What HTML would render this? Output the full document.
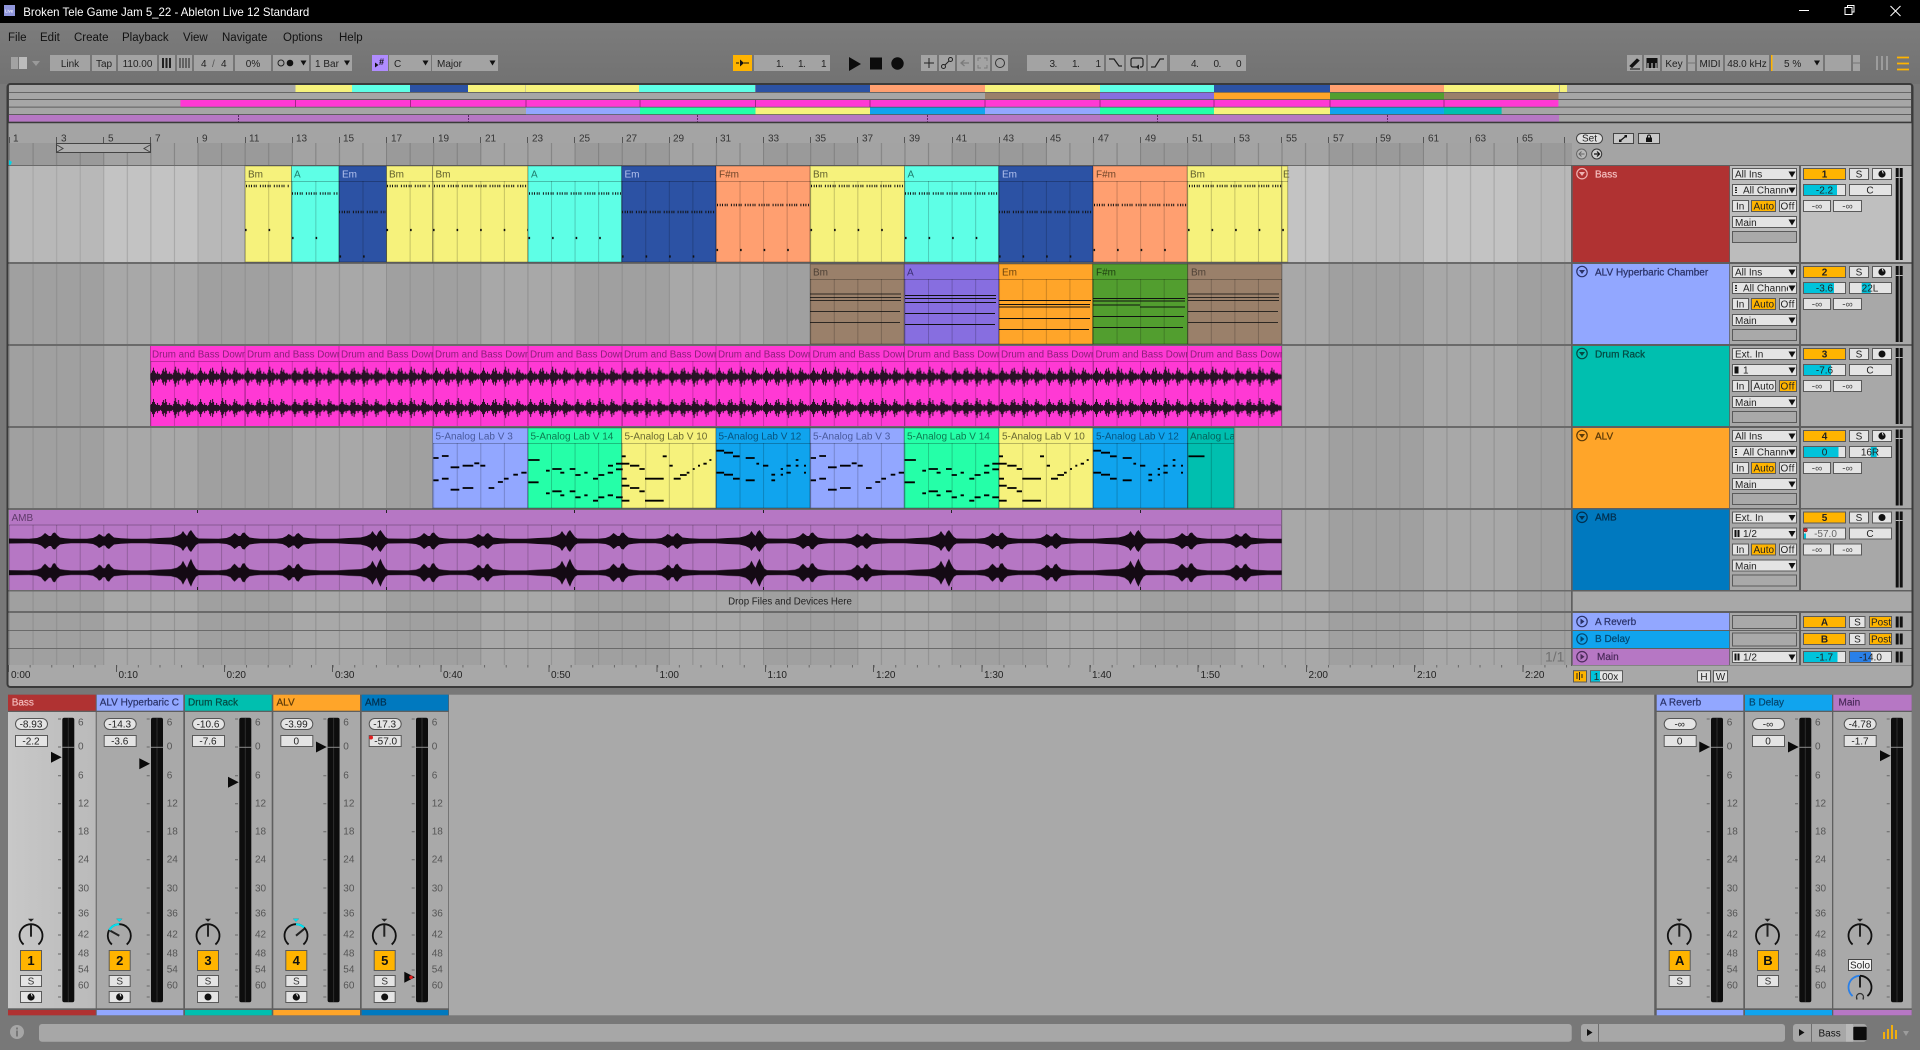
<!DOCTYPE html>
<html><head><meta charset="utf-8"><title>Broken Tele Game Jam 5_22 - Ableton Live 12 Standard</title>
<style>
html,body{margin:0;padding:0;background:#787878;width:1920px;height:1050px;overflow:hidden}
svg{display:block}
text{font-family:"Liberation Sans",sans-serif;font-size:10px;fill:#222}
.m{text-anchor:middle}
.t{fill:#a3a3a3}
.w{fill:#e4e4e4;stroke:#5a5a5a}
.o{fill:#ffb400;stroke:#5a5a5a}
.e{fill:#a9a9a9;stroke:#5a5a5a}
.k{stroke:#000;stroke-opacity:.28}
.l{stroke:#000;stroke-opacity:.25;fill:none}
.s{stroke:#222;fill:none}
.lb text{fill:#555}
.mn{font-size:11.5px;fill:#111}
.hl{stroke-width:.2}
</style></head><body>
<svg width="1920" height="1050" viewBox="0 0 1920 1050" xmlns="http://www.w3.org/2000/svg">
<defs>
<linearGradient id="tbg" x1="0" y1="0" x2="0" y2="1"><stop offset="0" stop-color="#7c7c7c"/><stop offset="1" stop-color="#727272"/></linearGradient>
<linearGradient id="sel" x1="0" y1="0" x2="1" y2="0"><stop offset="0" stop-color="#c8c8c8"/><stop offset="1" stop-color="#bababa"/></linearGradient>
<pattern id="g" patternUnits="userSpaceOnUse" x="9" y="0" width="188.52" height="10"><rect width="94.26" height="10" fill="#a0a0a0"/><rect x="94.26" width="94.26" height="10" fill="#a8a8a8"/><path d="M.5 0v10M24.07 0v10M47.63 0v10M71.2 0v10M94.76 0v10M118.33 0v10M141.89 0v10M165.46 0v10" stroke="#8f8f8f"/></pattern>
<pattern id="gs" patternUnits="userSpaceOnUse" x="9" y="0" width="188.52" height="10"><rect width="94.26" height="10" fill="#b8b8b8"/><rect x="94.26" width="94.26" height="10" fill="#c3c3c3"/><path d="M.5 0v10M24.07 0v10M47.63 0v10M71.2 0v10M94.76 0v10M118.33 0v10M141.89 0v10M165.46 0v10" stroke="#a4a4a4"/></pattern>
<pattern id="gr" patternUnits="userSpaceOnUse" x="9" y="0" width="188.52" height="10"><rect width="94.26" height="10" fill="#9a9a9a"/><rect x="94.26" width="94.26" height="10" fill="#a3a3a3"/><path d="M.5 0v10M24.07 0v10M47.63 0v10M71.2 0v10M94.76 0v10M118.33 0v10M141.89 0v10M165.46 0v10" stroke="#808080"/></pattern>
<pattern id="cg" patternUnits="userSpaceOnUse" x="9" y="0" width="23.565" height="10"><path d="M.5 0v10" stroke="#000" stroke-opacity=".2"/></pattern>
<pattern id="mt" patternUnits="userSpaceOnUse" x="8" y="665" width="21.64" height="3"><path d="M.5 0v3" stroke="#666"/></pattern>
<pattern id="dw" patternUnits="userSpaceOnUse" x="150" y="364.7" width="47.15" height="31.3"><path stroke="#1c101c" stroke-width=".95" d="M.5 9v6M1.5 8v8M2.5 6v12M3.5 3v18M4.5 6v12M5.5 8v8M6.5 9v6M7.5 7v10M8.5 9v6M9.5 9v6M10.5 10v4M11.5 9v6M12.5 6v12M13.5 4v16M14.5 7v10M15.5 3v18M16.5 6v12M17.5 9v6M18.5 9v6M19.5 7v10M20.5 9v6M21.5 9v6M22.5 10v4M23.5 8v8M24.5 5v14M25.5 2v20M26.5 6v12M27.5 8v8M28.5 4v16M29.5 8v8M30.5 9v6M31.5 10v4M32.5 8v8M33.5 9v6M34.5 10v4M35.5 9v6M36.5 6v12M37.5 3v18M38.5 7v10M39.5 5v14M40.5 8v8M41.5 9v6M42.5 8v8M43.5 9v6M44.5 10v4M45.5 9v6M46.5 10v4"/></pattern>
<pattern id="aw1" patternUnits="userSpaceOnUse" x="9" y="526" width="189.5" height="30"><polygon fill="#140a14" points="0,12.5 20,12.8 28,12 32,10.5 34,9 36,7 38,8.5 40,10 42,10 44,7 46,6.5 48,9 51,11.5 56,12.3 62,12.8 78,12.8 84,12 88,10 90,8 92,9 94,10.5 96,10.5 98,8 100,7 102,9 105,11.5 112,12.3 122,12.8 138,12.8 150,12 162,11.5 168,10 172,8 174,5 176,8 178,10 180,6 182,4 184,7 187,11 189.5,12.5 189.5,17.5 187,19 184,23 182,26 180,24 178,20 176,22 174,25 172,22 168,20 162,18.5 150,18 138,17.2 122,17.2 112,17.7 105,18.5 102,21 100,23 98,22 96,19.5 94,19.5 92,21 90,22 88,20 84,18 78,17.2 62,17.2 56,17.7 51,18.5 48,21 46,23.5 44,23 42,20 40,20 38,21.5 36,23 34,21 32,19.5 28,18 20,17.2 0,17.5"/></pattern>
<pattern id="aw2" patternUnits="userSpaceOnUse" x="9" y="557.7" width="189.5" height="30"><polygon fill="#140a14" points="0,12.5 20,12.8 28,12 32,10.5 34,8 36,6 38,8 40,10 42,10 44,6 46,5.5 48,9 51,11.5 56,12.3 62,12.8 78,12.8 84,12 88,9.5 90,7 92,8 94,10.5 96,10.5 98,7 100,6 102,9 105,11.5 112,12.3 122,12.8 138,12.8 150,12 162,11.5 168,10 172,7 174,3 176,7 178,10 180,5 182,1 184,6 187,11 189.5,12.5 189.5,17.5 187,19 184,24 182,29 180,25 178,20 176,23 174,27 172,23 168,20 162,18.5 150,18 138,17.2 122,17.2 112,17.7 105,18.5 102,21 100,24 98,23 96,19.5 94,19.5 92,22 90,23 88,20.5 84,18 78,17.2 62,17.2 56,17.7 51,18.5 48,21 46,24.5 44,24 42,20 40,20 38,22 36,24 34,22 32,19.5 28,18 20,17.2 0,17.5"/></pattern>

<g id="v3"><path stroke="#000" stroke-width="1.8" fill="none" d="M.7 458h5.3M9.3 456h6.7M18 467.3h8.7M30 465.7h10.7M41.7 463.3h5M47.7 465.7h5M.7 480.3h5.3M9.3 478.7h6.7M18 489.7h8.7M30 488h10.7M56 488h5.7M65.3 482h5M71.3 478.7h4.7M80.7 474.7h4.6M88.7 472.7h5.3"/></g>
<g id="v14"><path stroke="#000" stroke-width="1.8" fill="none" d="M.3 460h11.3M18 470.7h3.7M24.3 469h9.3M32.3 472.7h4M41.7 469h5.7M47.3 475h5.3M56.3 472.7h3.3M65 478.7h5M70.3 475h6M79.7 472.7h5.3M80 465.7h5M88 469.3h6.7M88 463.7h6.7M.3 482.3h10.3M18 493.3h3.7M24.3 491.3h9.3M32.3 495.3h4M41.7 491.3h5.7M47.3 497.3h5.3M56.3 495.3h3.3M65 500.7h5M70.3 497.3h6M79.7 495.3h5.3M88 497.3h6.7"/></g>
<g id="v10"><path stroke="#000" stroke-width="1.8" fill="none" d="M0 456.3h4M0 463.7h7.7M8.3 465.7h9.3M17.7 469h5.3M41 456.3h4M47.7 465.7h3.3M23.3 478.7h18.7M0 478.7h5M52 478.7h7M58.3 475h6.7M65 472.7h2.7M71 469h2M76.3 465.7h2M81.7 463.7h3.3M87.7 460h2M0 485.7h7.7M8.3 488h9.3M17.7 491.3h5.3M0 500.7h7.7M23.3 500.7h18.7"/></g>
<g id="v12"><path stroke="#000" stroke-width="1.8" fill="none" d="M.7 450.7h7.7M8.3 452.7h9M17.3 456.3h6.7M30 458h9M40.7 463.7h2.7M47.3 465.7h5.3M70.7 465.7h4.3M80 460h2.7M80 465.7h2.7M88.3 465.7h2M65 469h2.3M70.7 472.7h4.3M88.3 472.7h2M65 474.7h2.3M.7 472.7h7.7M8.3 474.7h9M17.3 478.7h6.7M30 480.3h9M55.7 474.7h3.7M55.7 480.3h3.7"/></g>

<path id="tri" d="M-3 -2.5h6l-3 5z" fill="#111"/>
<g id="hd">
<rect class="w" x="1732.5" y="2.5" width="64" height="11"/><path d="M1788.500 5.500h7l-3.500 6z" fill="#111"/>
<rect class="w" x="1732.5" y="18.5" width="64" height="11"/><path d="M1788.500 21.500h7l-3.500 6z" fill="#111"/>
<rect class="w" x="1732.5" y="34.5" width="16" height="11"/><rect class="w" x="1751.5" y="34.5" width="24" height="11"/><rect class="w" x="1779.5" y="34.5" width="17" height="11"/>
<rect class="w" x="1732.5" y="50.5" width="64" height="11"/><path d="M1788.500 53.500h7l-3.500 6z" fill="#111"/>
<rect class="e" x="1732.5" y="65.5" width="64" height="11"/>
<text x="1735" y="60">Main</text>
<rect class="o" x="1803.5" y="2.5" width="42" height="11"/>
<rect class="w" x="1849.5" y="2.500" width="19" height="11"/><text class="m" x="1859" y="11.500" fill="#333">S</text>
<rect class="w" x="1872.5" y="2.500" width="19" height="11"/>
<rect class="w" x="1803.5" y="18.5" width="42" height="11"/>
<rect class="w" x="1849.5" y="18.5" width="42" height="11"/>
<rect class="w" x="1803.5" y="34.5" width="27" height="11"/><text class="m" x="1817" y="43.500" style="fill:#444">-∞</text>
<rect class="w" x="1833.5" y="34.5" width="28" height="11"/><text class="m" x="1847.500" y="43.500" style="fill:#444">-∞</text>
</g>
<g id="r3"><text x="1736" y="43.500">In</text><text x="1753.500" y="43.500">Auto</text><text x="1780.500" y="43.500" letter-spacing=".4">Off</text></g>
<g id="midiarm"><circle r="3.600" fill="#111"/><path d="M.3 -3.200 L1.300 -.6" stroke="#eee" stroke-width="1"/></g>

<g id="knob"><path d="M-7.400 8.800A11.500 11.500 0 1 1 7.400 8.800" fill="none" stroke="#111" stroke-width="1.800"/><path d="M-3 -17h6l-3 3z" fill="#222"/></g>
<path id="nd" d="M0 1V-11" stroke="#222" stroke-width="2" fill="none"/>

<g id="pv"><rect x="7.500" y="718.500" width="32" height="11" rx="5.500" fill="#e4e4e4" stroke="#555"/><rect class="w" x="7.500" y="735.500" width="32" height="11"/></g>
<g id="fd"><rect x="54.300" y="717.700" width="12" height="284.600" rx="2" fill="#0d0d0d"/><path d="M60.300 718V1002" stroke="#2e2e2e"/><path d="M54.300 747.300h12" stroke="#8a8a8a"/></g>
<path id="tk" d="M50 719h3M50 747h3M50 775.700h3M50 803.700h3M50 831.700h3M50 859.700h3M50 888h3M50 913h3M50 935h3M50 954h3M50 970h3M50 986h3M50 997h3" stroke="#666" fill="none"/>
<g id="lb" class="lb"><text x="70" y="725.500">6</text><text x="70" y="749.500">0</text><text x="70" y="778.500">6</text><text x="70" y="806.500">12</text><text x="70" y="834.500">18</text><text x="70" y="862.500">24</text><text x="70" y="891.500">30</text><text x="70" y="916.500">36</text><text x="70" y="937.500">42</text><text x="70" y="956.500">48</text><text x="70" y="972.500">54</text><text x="70" y="988.500">60</text></g>
<g id="st"><use href="#pv"/><use href="#fd"/><use href="#tk"/><use href="#lb"/><rect class="o" x="12.500" y="950.500" width="21" height="20"/><rect class="w" x="12.500" y="975.500" width="21" height="11"/><text class="m" x="23" y="984.500" style="fill:#333">S</text></g>
</defs>

<!-- window -->
<rect width="1920" height="1050" fill="#787878"/>
<rect y="23" width="1920" height="61" fill="url(#tbg)"/>
<rect width="1920" height="23" fill="#000"/>
<rect x="4" y="5" width="11" height="11" fill="#9096dc"/><text x="5" y="12.500" style="font-size:4.500px;fill:#fff">Live</text>
<text x="23.300" y="16" textLength="286" lengthAdjust="spacingAndGlyphs" style="font-size:12px;fill:#fff">Broken Tele Game Jam 5_22 - Ableton Live 12 Standard</text>
<path d="M1799 10.500h10" stroke="#fff"/>
<path d="M1845 7.500h7v7h-7zM1847.500 7V5.500h6.500v6.500h-2" stroke="#fff" fill="none"/>
<path d="M1890.500 6l10 10M1900.500 6l-10 10" stroke="#fff" fill="none"/>

<!-- menu -->
<text class="mn" x="8" y="41">File</text><text class="mn" x="40" y="41">Edit</text><text class="mn" x="74" y="41">Create</text><text class="mn" x="122" y="41">Playback</text><text class="mn" x="183" y="41">View</text><text class="mn" x="222" y="41">Navigate</text><text class="mn" x="283" y="41">Options</text><text class="mn" x="339" y="41">Help</text>

<!-- toolbar left -->
<rect x="11" y="57" width="7" height="12" fill="#a2a2a2"/><rect x="19" y="57" width="8" height="12" fill="#bcbcbc"/><path d="M32 61h8l-4 5z" fill="#9a9a9a"/>
<rect class="t" x="50" y="55" width="40" height="16"/><text class="m" x="70" y="67">Link</text>
<rect class="t" x="92" y="55" width="24" height="16"/><text class="m" x="104" y="67">Tap</text>
<rect class="t" x="118" y="55" width="39" height="16"/><text class="m" x="137.500" y="67">110.00</text>
<rect class="t" x="159" y="55" width="16" height="16"/><path d="M162 58v10h2v-10zM165.500 58v10h2v-10zM169 58v10h2v-10z" fill="#222"/>
<rect class="t" x="177" y="55" width="15" height="16"/><path d="M180 58v10M183 58v10M186 58v10M189 58v10" stroke="#222"/>
<rect class="t" x="194" y="55" width="39" height="16"/><text x="201" y="67">4</text><text x="212" y="67" style="fill:#555">/</text><text x="221" y="67">4</text>
<rect class="t" x="235" y="55" width="36" height="16"/><text class="m" x="253" y="67">0%</text>
<rect class="t" x="273" y="55" width="36" height="16"/><circle cx="281" cy="63" r="3" class="s"/><circle cx="290" cy="63" r="3.300" fill="#111"/><use href="#tri" x="303.500" y="63"/>
<rect class="t" x="311" y="55" width="41" height="16"/><text x="315" y="67">1 Bar</text><use href="#tri" x="347" y="63"/>
<rect x="372" y="55" width="16" height="16" fill="#b08cff"/><path d="M375 62.500l3.500 2.500-3.500 2.500z" fill="#111"/><text x="379" y="65" style="font-size:9px;fill:#111;font-weight:bold">#</text>
<rect class="t" x="389" y="55" width="42" height="16"/><text x="394" y="67">C</text><use href="#tri" x="425.500" y="63"/>
<rect class="t" x="432" y="55" width="66" height="16"/><text x="437" y="67">Major</text><use href="#tri" x="492.500" y="63"/>

<!-- transport -->
<rect x="733" y="55" width="19" height="16" fill="#ffb400"/><path d="M736 63h3M740 63h3M744 63h5" stroke="#111"/><path d="M740 59.500l4 3.500-4 3.500z" fill="#111"/>
<rect class="t" x="754" y="55" width="76" height="16"/><text x="776 781 798 803 821" y="67">1.1.1</text>
<path d="M849 57v14l12-7z" fill="#0c0c0c"/><rect x="870" y="57.500" width="12" height="12" fill="#0c0c0c"/><circle cx="897.500" cy="63.500" r="6.200" fill="#0c0c0c"/>
<rect class="t" x="921" y="55" width="16" height="16"/><path d="M924 63h10M929 58v10" stroke="#222"/>
<rect class="t" x="939" y="55" width="16" height="16"/><circle cx="943.500" cy="66.500" r="2" class="s"/><circle cx="950.500" cy="59.500" r="2" class="s"/><path d="M945 65l4-4" stroke="#222"/>
<rect class="t" x="957" y="55" width="16" height="16"/><path d="M961 63h8M964.500 60l-3.500 3 3.500 3" stroke="#7b7b7b" stroke-width="1.300" fill="none"/>
<rect class="t" x="975" y="55" width="15" height="16"/><path d="M978 61v-3h3M984 58h3v3M987 65v3h-3M981 68h-3v-3" stroke="#7b7b7b" fill="none"/>
<rect class="t" x="992" y="55" width="16" height="16"/><circle cx="1000" cy="63" r="4.500" stroke="#333" fill="none"/>
<rect class="t" x="1027" y="55" width="77" height="16"/><text x="1049.500 1054.500 1072 1077 1095.500" y="67">3.1.1</text>
<rect class="t" x="1106" y="55" width="18" height="16"/><path d="M1109 59h5l5 7h3" stroke="#222" stroke-width="1.300" fill="none"/>
<rect class="t" x="1126" y="55" width="20" height="16"/><path d="M1136 67h-3a2 2 0 0 1-2-2v-5a2 2 0 0 1 2-2h8a2 2 0 0 1 2 2v5a2 2 0 0 1-2 2h-1" stroke="#222" stroke-width="1.200" fill="none"/><path d="M1139 64.500v5l-3.500-2.500z" fill="#222"/>
<rect class="t" x="1148" y="55" width="19" height="16"/><path d="M1151 67h4l5-8h4" stroke="#222" stroke-width="1.300" fill="none"/>
<rect class="t" x="1170" y="55" width="76" height="16"/><text x="1191 1196 1213.500 1218.500 1236" y="67">4.0.0</text>

<!-- toolbar right -->
<rect class="t" x="1627" y="55" width="15" height="16"/><path d="M1630 66l7-7 2 1.500-7 7zM1630 69h10" fill="#111" stroke="#111"/>
<rect class="t" x="1644" y="55" width="16" height="16"/><rect x="1646.500" y="58" width="11" height="10" fill="#111"/><path d="M1648 63v5.500M1652 63v5.500M1656 63v5.500" stroke="#ddd"/>
<rect class="t" x="1662" y="55" width="24" height="16"/><text class="m" x="1674" y="67">Key</text>
<rect class="t" x="1688" y="55" width="7" height="7.500"/><rect class="t" x="1688" y="63.500" width="7" height="7.500"/>
<rect class="t" x="1697" y="55" width="26" height="16"/><text class="m" x="1710" y="67">MIDI</text>
<rect class="t" x="1725" y="55" width="44" height="16"/><text class="m" x="1747" y="67">48.0 kHz</text>
<rect class="t" x="1771" y="55" width="52" height="16"/><rect x="1771" y="55" width="1.500" height="16" fill="#ffb400"/><text x="1784" y="67">5 %</text><use href="#tri" x="1817" y="63"/>
<rect class="t" x="1825" y="55" width="26" height="16"/>
<rect class="t" x="1853" y="55" width="7" height="7.500"/><rect class="t" x="1853" y="63.500" width="7" height="7.500"/>
<path d="M1877 56v14M1882 56v14M1887 56v14" stroke="#a9a9a9" stroke-width="1.500"/>
<path d="M1897 57.500h12M1897 63.500h12M1897 69.500h12" stroke="#ffb400" stroke-width="1.700"/>

<!-- overview -->
<rect x="8" y="84" width="1904" height="39" fill="#4c4c4c"/>
<rect x="9" y="85" width="1902" height="7" fill="#a6a6a6"/>
<rect x="9" y="92.700" width="1902" height="6.500" fill="#a6a6a6"/>
<rect x="9" y="100" width="1902" height="6.700" fill="#a6a6a6"/>
<rect x="9" y="107.500" width="1902" height="6.700" fill="#a6a6a6"/>
<rect x="9" y="115" width="1902" height="6.700" fill="#a6a6a6"/>
<g>
<rect x="295.500" y="85" width="56.500" height="7" fill="#f6f27c"/><rect x="352" y="85" width="58" height="7" fill="#5effe6"/><rect x="410" y="85" width="58" height="7" fill="#2c52a4"/><rect x="468" y="85" width="57.500" height="7" fill="#f6f27c"/><rect x="526" y="85" width="113" height="7" fill="#f6f27c"/><rect x="639" y="85" width="116" height="7" fill="#5effe6"/><rect x="755.500" y="85" width="114.500" height="7" fill="#2c52a4"/><rect x="870" y="85" width="115" height="7" fill="#ff9f70"/><rect x="985" y="85" width="115" height="7" fill="#f6f27c"/><rect x="1100" y="85" width="114" height="7" fill="#5effe6"/><rect x="1214" y="85" width="116" height="7" fill="#2c52a4"/><rect x="1330" y="85" width="114" height="7" fill="#ff9f70"/><rect x="1444" y="85" width="115" height="7" fill="#f6f27c"/><rect x="1560" y="85" width="7" height="7" fill="#f6f27c"/>
<rect x="985" y="92.700" width="115" height="6.500" fill="#9a806a"/><rect x="1100" y="92.700" width="114" height="6.500" fill="#876ee0"/><rect x="1214" y="92.700" width="116" height="6.500" fill="#ffa529"/><rect x="1330" y="92.700" width="114" height="6.500" fill="#529e2f"/><rect x="1444" y="92.700" width="114.500" height="6.500" fill="#9a806a"/>
<rect x="180.400" y="100" width="1378" height="6.700" fill="#ff39d4"/><path d="M295.500 100v7M410.500 100v7M526 100v7M640 100v7M755.500 100v7M870 100v7M985 100v7M1100 100v7M1214 100v7M1330 100v7M1444 100v7" stroke="#000" stroke-opacity=".35"/>
<rect x="526" y="107.500" width="114" height="6.700" fill="#92a7ff"/><rect x="640" y="107.500" width="115.500" height="6.700" fill="#25ffa8"/><rect x="755.500" y="107.500" width="114.500" height="6.700" fill="#f6f27c"/><rect x="870" y="107.500" width="115" height="6.700" fill="#10a4ee"/><rect x="985" y="107.500" width="115" height="6.700" fill="#92a7ff"/><rect x="1100" y="107.500" width="114" height="6.700" fill="#25ffa8"/><rect x="1214" y="107.500" width="116" height="6.700" fill="#f6f27c"/><rect x="1330" y="107.500" width="114" height="6.700" fill="#10a4ee"/><rect x="1444" y="107.500" width="57.600" height="6.700" fill="#00bfaf"/>
<rect x="9" y="115" width="1550" height="6.700" fill="#b677c4"/><path d="M238.500 115v7M468.500 115v7M697.500 115v7M927.500 115v7M1157.500 115v7M1387.500 115v7" stroke="#5a2a66" stroke-dasharray="2 1"/>
</g>

<!-- ruler -->
<rect x="8" y="123" width="1564" height="20" fill="#a4a4a4"/>
<rect x="8" y="143" width="1564" height="22" fill="url(#gr)"/>
<rect x="1572" y="123" width="340" height="42" fill="#a4a4a4"/>
<path stroke="#555" d="M9.500 137v6M56.500 137v6M103.500 137v6M150.500 137v6M197.500 137v6M245.500 137v6M292.500 137v6M339.500 137v6M386.500 137v6M433.500 137v6M480.500 137v6M527.500 137v6M574.500 137v6M622.500 137v6M669.500 137v6M716.500 137v6M763.500 137v6M810.500 137v6M857.500 137v6M904.500 137v6M952.500 137v6M999.500 137v6M1046.500 137v6M1093.500 137v6M1140.500 137v6M1187.500 137v6M1234.500 137v6M1281.500 137v6M1328.500 137v6M1376.500 137v6M1423.500 137v6M1470.500 137v6M1517.500 137v6M1564.500 137v6"/>
<text x="13" y="141.500" style="fill:#333">1</text><text x="61" y="141.500" style="fill:#333">3</text><text x="108" y="141.500" style="fill:#333">5</text><text x="155" y="141.500" style="fill:#333">7</text><text x="202" y="141.500" style="fill:#333">9</text><text x="249" y="141.500" style="fill:#333">11</text><text x="296" y="141.500" style="fill:#333">13</text><text x="343" y="141.500" style="fill:#333">15</text><text x="391" y="141.500" style="fill:#333">17</text><text x="438" y="141.500" style="fill:#333">19</text><text x="485" y="141.500" style="fill:#333">21</text><text x="532" y="141.500" style="fill:#333">23</text><text x="579" y="141.500" style="fill:#333">25</text><text x="626" y="141.500" style="fill:#333">27</text><text x="673" y="141.500" style="fill:#333">29</text><text x="720" y="141.500" style="fill:#333">31</text><text x="768" y="141.500" style="fill:#333">33</text><text x="815" y="141.500" style="fill:#333">35</text><text x="862" y="141.500" style="fill:#333">37</text><text x="909" y="141.500" style="fill:#333">39</text><text x="956" y="141.500" style="fill:#333">41</text><text x="1003" y="141.500" style="fill:#333">43</text><text x="1050" y="141.500" style="fill:#333">45</text><text x="1098" y="141.500" style="fill:#333">47</text><text x="1145" y="141.500" style="fill:#333">49</text><text x="1192" y="141.500" style="fill:#333">51</text><text x="1239" y="141.500" style="fill:#333">53</text><text x="1286" y="141.500" style="fill:#333">55</text><text x="1333" y="141.500" style="fill:#333">57</text><text x="1380" y="141.500" style="fill:#333">59</text><text x="1428" y="141.500" style="fill:#333">61</text><text x="1475" y="141.500" style="fill:#333">63</text><text x="1522" y="141.500" style="fill:#333">65</text>
<!-- loop brace -->
<rect x="56.500" y="143.500" width="94" height="9" fill="#adadad" stroke="#444"/>
<path d="M57 145l6 3.500-6 3.500M150 145l-6 3.500 6 3.500" fill="none" stroke="#444"/>
<path d="M9 160v5h1.500l1.500-3z" fill="#00d6e6"/>

<!-- Set -->
<rect x="1576.500" y="133.500" width="26" height="10" rx="5" fill="#dedede" stroke="#444"/><text class="m" x="1589.500" y="141.500">Set</text>
<rect x="1613.500" y="133.500" width="20" height="10" fill="#c8c8c8" stroke="#444"/><path d="M1620 141l6-5" stroke="#111" stroke-width="1.200"/><rect x="1619" y="139.500" width="2.500" height="2.500" fill="#111"/><rect x="1624.500" y="135" width="2.500" height="2.500" fill="#111"/>
<rect x="1638.500" y="133.500" width="21" height="10" fill="#c8c8c8" stroke="#444"/><rect x="1646" y="137.500" width="6" height="4.500" fill="#111"/><path d="M1647.500 137.500v-1a1.500 1.500 0 0 1 3 0v1" stroke="#111" fill="none"/>
<circle cx="1581.600" cy="154" r="5" fill="#b9b9b9" stroke="#666"/><path d="M1584.500 154h-5M1581.500 151.500l-2.500 2.500 2.500 2.500" stroke="#666" fill="none"/>
<circle cx="1596.700" cy="154" r="5" fill="#cfcfcf" stroke="#333"/><path d="M1594 154h5M1597 151.500l2.500 2.500-2.500 2.500" stroke="#111" fill="none" stroke-width="1.200"/>

<!-- track backgrounds -->
<rect x="8" y="165" width="1564" height="501" fill="#6a6a6a"/>
<rect x="8" y="166" width="1564" height="96" fill="url(#gs)"/>
<rect x="8" y="264" width="1564" height="80" fill="url(#g)"/>
<rect x="8" y="346" width="1564" height="80" fill="url(#g)"/>
<rect x="8" y="428" width="1564" height="80" fill="url(#g)"/>
<rect x="8" y="510" width="1564" height="80" fill="url(#g)"/>
<rect x="8" y="591.500" width="1564" height="19.500" fill="url(#g)"/>
<rect x="8" y="613" width="1564" height="17" fill="url(#g)"/>
<rect x="8" y="631" width="1564" height="17" fill="url(#g)"/>
<rect x="8" y="649" width="1564" height="16" fill="url(#g)"/>
<text class="m" x="790" y="604.500" style="fill:#222;font-size:9.700px">Drop Files and Devices Here</text>
<rect x="8" y="665" width="1564" height="21" fill="#a8a8a8"/>
<rect x="8" y="665" width="1564" height="2.500" fill="url(#mt)"/>
<path stroke="#555" d="M8.500 665v7M116.500 665v7M224.500 665v7M332.500 665v7M441 665v7M549 665v7M657 665v7M765.500 665v7M873.500 665v7M982 665v7M1090 665v7M1198 665v7M1306.500 665v7M1414.500 665v7M1523 665v7"/>
<g><text x="11" y="678">0:00</text><text x="118.500" y="678">0:10</text><text x="226.500" y="678">0:20</text><text x="335" y="678">0:30</text><text x="443" y="678">0:40</text><text x="551" y="678">0:50</text><text x="659.500" y="678">1:00</text><text x="767.500" y="678">1:10</text><text x="876" y="678">1:20</text><text x="984" y="678">1:30</text><text x="1092" y="678">1:40</text><text x="1200.500" y="678">1:50</text><text x="1308.500" y="678">2:00</text><text x="1417" y="678">2:10</text><text x="1525" y="678">2:20</text></g>
<text x="1545" y="661.500" style="font-size:14px;fill:#707070">1/1</text>

<!-- Track 1 clips -->
<g class="k">
<rect x="245" y="166" width="46.500" height="96" fill="#f6f27c"/><rect x="291.500" y="166" width="47.500" height="96" fill="#5effe6"/><rect x="339" y="166" width="47.500" height="96" fill="#2c52a4"/><rect x="386.500" y="166" width="46.100" height="96" fill="#f6f27c"/><rect x="432.600" y="166" width="95.400" height="96" fill="#f6f27c"/><rect x="528" y="166" width="93.700" height="96" fill="#5effe6"/><rect x="621.700" y="166" width="94.300" height="96" fill="#2c52a4"/><rect x="716" y="166" width="94.200" height="96" fill="#ff9f70"/><rect x="810.200" y="166" width="94.300" height="96" fill="#f6f27c"/><rect x="904.500" y="166" width="94.200" height="96" fill="#5effe6"/><rect x="998.700" y="166" width="94.300" height="96" fill="#2c52a4"/><rect x="1093" y="166" width="94.300" height="96" fill="#ff9f70"/><rect x="1187.300" y="166" width="94.400" height="96" fill="#f6f27c"/><rect x="1281.700" y="166" width="6" height="96" fill="#f6f27c"/>
</g>
<rect x="245" y="181" width="1043" height="81" fill="url(#cg)"/>
<path class="l" d="M245 181.500H1288"/>
<g>
<text x="248" y="177.500" style="fill:#5e5d2c">Bm</text><text x="294" y="177.500" style="fill:#1f7d6e">A</text><text x="342" y="177.500" style="fill:#b4c2ee">Em</text><text x="389" y="177.500" style="fill:#5e5d2c">Bm</text><text x="435.500" y="177.500" style="fill:#5e5d2c">Bm</text><text x="531" y="177.500" style="fill:#1f7d6e">A</text><text x="624.500" y="177.500" style="fill:#b4c2ee">Em</text><text x="719" y="177.500" style="fill:#6e4428">F#m</text><text x="813" y="177.500" style="fill:#5e5d2c">Bm</text><text x="907.500" y="177.500" style="fill:#1f7d6e">A</text><text x="1002" y="177.500" style="fill:#b4c2ee">Em</text><text x="1096" y="177.500" style="fill:#6e4428">F#m</text><text x="1190" y="177.500" style="fill:#5e5d2c">Bm</text><text x="1283" y="177.500" style="fill:#5e5d2c">E</text>
</g>
<g fill="none" stroke="#111" stroke-width="2.400" stroke-dasharray="1 1.700 1 1.300 1 1.700 1 1 1 3.200">
<path d="M246 186H290M387 186H431M434 186H527M811 186H903M1189 186H1282"/>
<path d="M292 193.500H338M529 193.500H621M905 193.500H998"/>
<path d="M339 212H386M622 212H715M999 212H1092"/>
<path d="M717 205H809M1094 205H1187"/>
</g>
<g fill="none" stroke="#111" stroke-width="2.200" stroke-dasharray="1.600 21.965">
<path d="M245 230H291M386.500 230H432M433 230H528M810.500 230H904M1188 230H1286"/>
<path d="M292 238H339M528.500 238H622M905 238H999"/>
<path d="M339.500 256.500H386M622 256.500H716M999 256.500H1093"/>
<path d="M716.500 250H810M1093.500 250H1187"/>
</g>

<!-- Track 2 clips -->
<g class="k">
<rect x="810.200" y="264" width="94.100" height="80" fill="#9a806a"/><rect x="904.300" y="264" width="94.700" height="80" fill="#876ee0"/><rect x="999" y="264" width="93.700" height="80" fill="#ffa529"/><rect x="1092.700" y="264" width="95" height="80" fill="#529e2f"/><rect x="1187.700" y="264" width="94" height="80" fill="#9a806a"/>
</g>
<rect x="810" y="279" width="472" height="65" fill="url(#cg)"/>
<path class="l" d="M810 279.500H1282"/>
<text x="813" y="275.500" style="fill:#4e4136">Bm</text><text x="907" y="275.500" style="fill:#3b2f73">A</text><text x="1002" y="275.500" style="fill:#6e440c">Em</text><text x="1096" y="275.500" style="fill:#1e3f10">F#m</text><text x="1191" y="275.500" style="fill:#4e4136">Bm</text>
<g fill="none" stroke="#111">
<path d="M810 294H901M810 297.500H901M810 300.500H901M810 311.500H900M810 322.500H900" stroke-opacity=".8"/>
<path d="M905 295.500H996M905 298.500H996M905 302.500H996M905 313.500H995M905 324.500H995"/>
<path d="M999 300.500H1091M999 304.500H1090M999 307H1090M999 318.500H1090M999 329.500H1089"/>
<path d="M1093 298.500H1185M1093 301H1185M1093 305H1140M1140 307H1185M1093 316.500H1184M1093 327.500H1183"/>
<path d="M1188 294H1279M1188 297.500H1279M1188 300.500H1279M1188 311.500H1278M1188 322.500H1278" stroke-opacity=".8"/>
</g>

<!-- Track 3 clips -->
<rect x="150.400" y="346" width="1131.300" height="80" fill="#ff39d4"/>
<rect x="150" y="346" width="1132" height="15" fill="#ff39d4"/>
<rect x="150.400" y="361" width="1131.300" height="65" fill="url(#cg)"/>
<rect x="150.400" y="364.700" width="1131.300" height="24" fill="url(#dw)"/>
<rect x="150.400" y="396" width="1131.300" height="24" fill="url(#dw)"/>
<path class="l" d="M150 361.500H1282M150.500 346v80M245 346v80M339 346v80M433 346v80M528 346v80M622 346v80M716 346v80M810 346v80M904.500 346v80M999 346v80M1093 346v80M1187.500 346v80M1281.500 346v80" stroke-opacity=".35"/>
<g>
<svg x="152" y="346" width="93" height="15"><text y="11.500" style="fill:#8a1f78;font-size:9.800px">Drum and Bass Down</text></svg>
<svg x="247" y="346" width="92" height="15"><text y="11.500" style="fill:#8a1f78;font-size:9.800px">Drum and Bass Down</text></svg>
<svg x="341" y="346" width="92" height="15"><text y="11.500" style="fill:#8a1f78;font-size:9.800px">Drum and Bass Down</text></svg>
<svg x="435" y="346" width="93" height="15"><text y="11.500" style="fill:#8a1f78;font-size:9.800px">Drum and Bass Down</text></svg>
<svg x="530" y="346" width="92" height="15"><text y="11.500" style="fill:#8a1f78;font-size:9.800px">Drum and Bass Down</text></svg>
<svg x="624" y="346" width="92" height="15"><text y="11.500" style="fill:#8a1f78;font-size:9.800px">Drum and Bass Down</text></svg>
<svg x="718" y="346" width="92" height="15"><text y="11.500" style="fill:#8a1f78;font-size:9.800px">Drum and Bass Down</text></svg>
<svg x="812.500" y="346" width="92" height="15"><text y="11.500" style="fill:#8a1f78;font-size:9.800px">Drum and Bass Down</text></svg>
<svg x="907" y="346" width="92" height="15"><text y="11.500" style="fill:#8a1f78;font-size:9.800px">Drum and Bass Down</text></svg>
<svg x="1001" y="346" width="92" height="15"><text y="11.500" style="fill:#8a1f78;font-size:9.800px">Drum and Bass Down</text></svg>
<svg x="1095.500" y="346" width="92" height="15"><text y="11.500" style="fill:#8a1f78;font-size:9.800px">Drum and Bass Down</text></svg>
<svg x="1190" y="346" width="92" height="15"><text y="11.500" style="fill:#8a1f78;font-size:9.800px">Drum and Bass Down</text></svg>
</g>

<!-- Track 4 clips -->
<g class="k">
<rect x="432.600" y="428" width="95.400" height="80" fill="#92a7ff"/><rect x="528" y="428" width="93.700" height="80" fill="#25ffa8"/><rect x="621.700" y="428" width="94.300" height="80" fill="#f6f27c"/><rect x="716" y="428" width="94.200" height="80" fill="#10a4ee"/><rect x="810.200" y="428" width="94.100" height="80" fill="#92a7ff"/><rect x="904.300" y="428" width="94.700" height="80" fill="#25ffa8"/><rect x="999" y="428" width="94" height="80" fill="#f6f27c"/><rect x="1093" y="428" width="94.700" height="80" fill="#10a4ee"/><rect x="1187.700" y="428" width="46.300" height="80" fill="#00bfaf"/>
</g>
<rect x="433" y="443" width="801" height="65" fill="url(#cg)"/>
<path class="l" d="M433 443.500H1234"/>
<text x="435.500" y="439.500" style="fill:#4a5a9c">5-Analog Lab V 3</text><text x="530.500" y="439.500" style="fill:#0d7a50">5-Analog Lab V 14</text><text x="624.500" y="439.500" style="fill:#6a6932">5-Analog Lab V 10</text><text x="718.500" y="439.500" style="fill:#07537e">5-Analog Lab V 12</text><text x="813" y="439.500" style="fill:#4a5a9c">5-Analog Lab V 3</text><text x="907" y="439.500" style="fill:#0d7a50">5-Analog Lab V 14</text><text x="1002" y="439.500" style="fill:#6a6932">5-Analog Lab V 10</text><text x="1096" y="439.500" style="fill:#07537e">5-Analog Lab V 12</text>
<svg x="1190" y="428" width="44" height="15"><text y="11.500" style="fill:#04625a">Analog Lab V</text></svg>
<use href="#v3" x="432.600"/><use href="#v14" x="528"/><use href="#v10" x="621.700"/><use href="#v12" x="715.700"/>
<use href="#v3" x="810"/><use href="#v14" x="904.300"/><use href="#v10" x="999"/><use href="#v12" x="1092.700"/>
<path d="M1188.500 456.300h16" stroke="#000" stroke-width="1.800"/>

<!-- Track 5 clip -->
<rect x="9" y="510" width="1272.700" height="80" fill="#b677c4"/>
<rect x="9" y="525" width="1272.700" height="65" fill="url(#cg)"/>
<rect x="9" y="526" width="1272.700" height="30" fill="url(#aw1)"/>
<rect x="9" y="557.700" width="1272.700" height="30" fill="url(#aw2)"/>
<path class="l" d="M9 525H1282M1281.500 510v80"/>
<path d="M197.500 510v3M386.500 510v3M574.500 510v3M763.500 510v3M951.500 510v3M1140.500 510v3M197.500 587v3M386.500 587v3M574.500 587v3M763.500 587v3M951.500 587v3M1140.500 587v3" stroke="#222"/>
<text x="11.500" y="521" style="fill:#5f3a6a">AMB</text>

<!-- Heads -->
<rect x="1571" y="165" width="341" height="501" fill="#5f5f5f"/>
<rect x="1572.700" y="166" width="156.500" height="96" fill="#b03232"/><rect x="1730" y="166" width="69" height="96" fill="#bcbcbc"/><rect x="1801" y="166" width="111" height="96" fill="#bfbfbf"/>
<rect x="1572.700" y="264" width="156.500" height="80" fill="#92a7ff"/><rect x="1730" y="264" width="69" height="80" fill="#a8a8a8"/><rect x="1801" y="264" width="111" height="80" fill="#a8a8a8"/>
<rect x="1572.700" y="346" width="156.500" height="80" fill="#00bfaf"/><rect x="1730" y="346" width="69" height="80" fill="#a8a8a8"/><rect x="1801" y="346" width="111" height="80" fill="#a8a8a8"/>
<rect x="1572.700" y="428" width="156.500" height="80" fill="#ffa529"/><rect x="1730" y="428" width="69" height="80" fill="#a8a8a8"/><rect x="1801" y="428" width="111" height="80" fill="#a8a8a8"/>
<rect x="1572.700" y="509.500" width="156.500" height="80.500" fill="#0079bf"/><rect x="1730" y="509.500" width="69" height="80.500" fill="#a8a8a8"/><rect x="1801" y="509.500" width="111" height="80.500" fill="#a8a8a8"/>
<rect x="1572.700" y="591.500" width="339.300" height="19.500" fill="#a8a8a8"/>
<rect x="1572.700" y="613" width="156.500" height="17" fill="#92a7ff"/><rect x="1730" y="613" width="69" height="17" fill="#a8a8a8"/><rect x="1801" y="613" width="111" height="17" fill="#a8a8a8"/>
<rect x="1572.700" y="631" width="156.500" height="17" fill="#10a4ee"/><rect x="1730" y="631" width="69" height="17" fill="#a8a8a8"/><rect x="1801" y="631" width="111" height="17" fill="#a8a8a8"/>
<rect x="1572.700" y="649" width="156.500" height="16" fill="#b677c4"/><rect x="1730" y="649" width="69" height="16" fill="#a8a8a8"/><rect x="1801" y="649" width="111" height="16" fill="#a8a8a8"/>
<rect x="1572" y="665.500" width="340" height="21" fill="#a8a8a8"/>

<!-- Head names -->
<g fill="none" stroke-width="1.200">
<circle cx="1582" cy="173.700" r="5.200" stroke="#efb4b4"/><circle cx="1582" cy="271.500" r="5.200" stroke="#2a3268"/><circle cx="1582" cy="353.500" r="5.200" stroke="#044a42"/><circle cx="1582" cy="435.500" r="5.200" stroke="#5c3a08"/><circle cx="1582" cy="517.300" r="5.200" stroke="#01304f"/><circle cx="1582" cy="621.500" r="5.200" stroke="#2a3268"/><circle cx="1582" cy="639" r="5.200" stroke="#04466e"/><circle cx="1582" cy="656.700" r="5.200" stroke="#4a2a5a"/>
</g>
<path d="M1579 172h6l-3 4z" fill="#efb4b4"/><path d="M1579 270h6l-3 4z" fill="#2a3268"/><path d="M1579 352h6l-3 4z" fill="#044a42"/><path d="M1579 434h6l-3 4z" fill="#5c3a08"/><path d="M1579 516h6l-3 4z" fill="#01304f"/>
<path d="M1580.500 618.500l4 3-4 3z" fill="#2a3268"/><path d="M1580.500 636l4 3-4 3z" fill="#04466e"/><path d="M1580.500 653.700l4 3-4 3z" fill="#4a2a5a"/>
<text x="1595" y="177.500" style="fill:#f3bcbc;stroke:#f3bcbc;stroke-width:.25">Bass</text>
<text x="1595" y="275.500" style="fill:#2a3268;stroke:#2a3268;stroke-width:.25">ALV Hyperbaric Chamber</text>
<text x="1595" y="357.500" style="fill:#044a42;stroke:#044a42;stroke-width:.25">Drum Rack</text>
<text x="1595" y="439.500" style="fill:#5c3a08;stroke:#5c3a08;stroke-width:.25">ALV</text>
<text x="1595" y="520.500" style="fill:#01304f;stroke:#01304f;stroke-width:.25">AMB</text>
<text x="1595" y="625" style="fill:#2a3268;stroke:#2a3268;stroke-width:.2">A Reverb</text>
<text x="1595" y="642" style="fill:#04466e;stroke:#04466e;stroke-width:.2">B Delay</text>
<text x="1597" y="660" style="fill:#4a2a5a;stroke:#4a2a5a;stroke-width:.2">Main</text>

<!-- Track 1 controls -->
<g transform="translate(0,166)"><use href="#hd"/><rect class="o" x="1751.500" y="34.500" width="24" height="11"/><use href="#r3"/>
<text x="1735" y="11.500">All Ins</text><path d="M1736 21v1.500M1736 23.500v1.500M1736 27v-1" stroke="#222" stroke-width="2"/><svg x="1743" y="18" width="45" height="12"><text y="9.500">All Channels</text></svg>
<text class="m" x="1824.500" y="11.500" style="font-weight:bold">1</text><use href="#midiarm" x="1882" y="8"/>
<rect x="1804" y="19" width="33" height="10" fill="#00c3db"/><text class="m" x="1824.500" y="27.500">-2.2</text><text class="m" x="1870" y="27.500">C</text></g>
<!-- Track 2 controls -->
<g transform="translate(0,264)"><use href="#hd"/><rect class="o" x="1751.500" y="34.500" width="24" height="11"/><use href="#r3"/>
<text x="1735" y="11.500">All Ins</text><path d="M1736 21v1.500M1736 23.500v1.500M1736 27v-1" stroke="#222" stroke-width="2"/><svg x="1743" y="18" width="45" height="12"><text y="9.500">All Channels</text></svg>
<text class="m" x="1824.500" y="11.500" style="font-weight:bold">2</text><use href="#midiarm" x="1882" y="8"/>
<rect x="1804" y="19" width="30" height="10" fill="#00c3db"/><text class="m" x="1824.500" y="27.500">-3.6</text><rect x="1861.700" y="19" width="9" height="10" fill="#00c3db"/><text class="m" x="1870" y="27.500">22L</text></g>
<!-- Track 3 controls -->
<g transform="translate(0,346)"><use href="#hd"/><rect class="o" x="1779.500" y="34.500" width="17" height="11"/><use href="#r3"/>
<text x="1735" y="11.500">Ext. In</text><rect x="1734.500" y="20.500" width="4" height="7" fill="#111"/><text x="1743" y="27.500">1</text>
<text class="m" x="1824.500" y="11.500" style="font-weight:bold">3</text><circle cx="1882" cy="8" r="3.500" fill="#111"/>
<rect x="1804" y="19" width="27" height="10" fill="#00c3db"/><text class="m" x="1824.500" y="27.500">-7.6</text><text class="m" x="1870" y="27.500">C</text></g>
<!-- Track 4 controls -->
<g transform="translate(0,428)"><use href="#hd"/><rect class="o" x="1751.500" y="34.500" width="24" height="11"/><use href="#r3"/>
<text x="1735" y="11.500">All Ins</text><path d="M1736 21v1.500M1736 23.500v1.500M1736 27v-1" stroke="#222" stroke-width="2"/><svg x="1743" y="18" width="45" height="12"><text y="9.500">All Channels</text></svg>
<text class="m" x="1824.500" y="11.500" style="font-weight:bold">4</text><use href="#midiarm" x="1882" y="8"/>
<rect x="1804" y="19" width="34.500" height="10" fill="#00c3db"/><text class="m" x="1824.500" y="27.500">0</text><rect x="1870.700" y="19" width="6" height="10" fill="#00c3db"/><text class="m" x="1870" y="27.500">16R</text></g>
<!-- Track 5 controls -->
<g transform="translate(0,509.500)"><use href="#hd"/><rect class="o" x="1751.500" y="34.500" width="24" height="11"/><use href="#r3"/>
<text x="1735" y="11.500">Ext. In</text><rect x="1734.500" y="20.500" width="2" height="7" fill="#111"/><rect x="1737.500" y="20.500" width="2" height="7" fill="#111"/><text x="1743" y="27.500">1/2</text>
<text class="m" x="1824.500" y="11.500" style="font-weight:bold">5</text><circle cx="1882" cy="8" r="3.500" fill="#111"/>
<rect x="1804" y="24" width="2" height="5" fill="#00c3db"/><circle cx="1805.500" cy="20.500" r="2" fill="#e02020" stroke="#333" stroke-width=".5"/><text class="m" x="1825.500" y="27.500" style="fill:#666">-57.0</text><text class="m" x="1870" y="27.500">C</text></g>

<!-- Returns / Main controls -->
<g>
<rect class="e" x="1732.500" y="615.500" width="64" height="13"/><rect class="o" x="1803.500" y="616.500" width="42" height="11"/><text class="m" x="1824.500" y="625.500" style="font-weight:bold">A</text><rect class="w" x="1849.500" y="616.500" width="15.500" height="11"/><text class="m" x="1857.500" y="625.500">S</text><rect class="o" x="1869.500" y="616.500" width="22" height="11"/><text x="1871" y="625.500" textLength="20" lengthAdjust="spacingAndGlyphs">Post</text>
<rect class="e" x="1732.500" y="633" width="64" height="13"/><rect class="o" x="1803.500" y="633.500" width="42" height="11"/><text class="m" x="1824.500" y="642.500" style="font-weight:bold">B</text><rect class="w" x="1849.500" y="633.500" width="15.500" height="11"/><text class="m" x="1857.500" y="642.500">S</text><rect class="o" x="1869.500" y="633.500" width="22" height="11"/><text x="1871" y="642.500" textLength="20" lengthAdjust="spacingAndGlyphs">Post</text>
<rect class="w" x="1732.500" y="651.500" width="64" height="11"/><rect x="1734.500" y="653.500" width="2" height="7" fill="#111"/><rect x="1737.500" y="653.500" width="2" height="7" fill="#111"/><text x="1743" y="660.500">1/2</text><path d="M1788.500 654.500h7l-3.500 6z" fill="#111"/>
<rect class="w" x="1803.500" y="651.500" width="42" height="11"/><rect x="1804" y="652" width="33.500" height="10" fill="#00c3db"/><text class="m" x="1824.500" y="660.500">-1.7</text>
<rect class="w" x="1849.500" y="651.500" width="42" height="11"/><rect x="1850" y="652" width="21" height="10" fill="#2a80e8"/><text class="m" x="1870.500" y="660.500">-14.0</text>
</g>
<!-- Meters -->
<path fill="#111" d="M1895.700 168h3v92h-3zM1899.700 168h3v92h-3zM1895.700 266h3v76h-3zM1899.700 266h3v76h-3zM1895.700 348h3v76h-3zM1899.700 348h3v76h-3zM1895.700 429.500h3v76h-3zM1899.700 429.500h3v76h-3zM1895.700 511.500h3v76h-3zM1899.700 511.500h3v76h-3zM1895.700 616.500h3v11h-3zM1899.700 616.500h3v11h-3zM1895.700 633.500h3v11h-3zM1899.700 633.500h3v11h-3zM1895.700 651.500h3v11h-3zM1899.700 651.500h3v11h-3z"/>
<path stroke="#bbb" d="M1895.700 177.500h7M1895.700 275.500h7M1895.700 357.500h7M1895.700 438.500h7M1895.700 520.500h7"/>
<!-- bottom arrangement buttons -->
<rect class="o" x="1573.500" y="670.700" width="13" height="11.300"/><path d="M1577 673v6M1579.500 672v8M1582 674v4" stroke="#222"/>
<rect class="w" x="1590.500" y="670.700" width="32" height="11.300"/><rect x="1591" y="671" width="9" height="10.500" fill="#00c3db"/><text class="m" x="1606" y="680">1.00x</text>
<rect class="w" x="1697.500" y="670.700" width="13" height="11.300"/><text class="m" x="1704" y="680">H</text>
<rect class="w" x="1713.500" y="670.700" width="14" height="11.300"/><text class="m" x="1720.500" y="680">W</text>
<!-- arrangement frame -->
<rect x="7.500" y="84" width="1905" height="603" rx="3" fill="none" stroke="#3a3a3a" stroke-width="2"/>
<path d="M8 122.500H1912" stroke="#3a3a3a" stroke-width="1.500"/>

<!-- Mixer -->
<rect x="449" y="694.700" width="1205.300" height="320.600" fill="#a9a9a9"/>
<rect x="8" y="694.700" width="441" height="320.600" fill="#5f5f5f"/>
<rect x="1654.300" y="694.700" width="257.500" height="320.600" fill="#5f5f5f"/>
<g>
<rect x="8" y="694.700" width="87.700" height="16" fill="#b03232"/><rect x="8" y="712" width="87.700" height="296.300" fill="url(#sel)"/><rect x="8" y="1010" width="87.700" height="5.300" fill="#b03232"/>
<rect x="96.700" y="694.700" width="86.600" height="16" fill="#92a7ff"/><rect x="96.700" y="712" width="86.600" height="296.300" fill="#a9a9a9"/><rect x="96.700" y="1010" width="86.600" height="5.300" fill="#92a7ff"/>
<rect x="185" y="694.700" width="86.700" height="16" fill="#00bfaf"/><rect x="185" y="712" width="86.700" height="296.300" fill="#a9a9a9"/><rect x="185" y="1010" width="86.700" height="5.300" fill="#00bfaf"/>
<rect x="273.300" y="694.700" width="86.700" height="16" fill="#ffa529"/><rect x="273.300" y="712" width="86.700" height="296.300" fill="#a9a9a9"/><rect x="273.300" y="1010" width="86.700" height="5.300" fill="#ffa529"/>
<rect x="361.700" y="694.700" width="86.600" height="16" fill="#0079bf"/><rect x="361.700" y="712" width="86.600" height="296.300" fill="#a9a9a9"/><rect x="361.700" y="1010" width="86.600" height="5.300" fill="#0079bf"/>
<rect x="1656.700" y="694.700" width="86.600" height="16" fill="#92a7ff"/><rect x="1656.700" y="712" width="86.600" height="296.300" fill="#a9a9a9"/><rect x="1656.700" y="1010" width="86.600" height="5.300" fill="#92a7ff"/>
<rect x="1745" y="694.700" width="87" height="16" fill="#10a4ee"/><rect x="1745" y="712" width="87" height="296.300" fill="#a9a9a9"/><rect x="1745" y="1010" width="87" height="5.300" fill="#10a4ee"/>
<rect x="1833.300" y="694.700" width="78.400" height="16" fill="#b677c4"/><rect x="1833.300" y="712" width="78.400" height="296.300" fill="#a9a9a9"/><rect x="1833.300" y="1010" width="78.400" height="5.300" fill="#b677c4"/>
</g>
<text x="11.700" y="705.500" style="fill:#f3bcbc;stroke:#f3bcbc;stroke-width:.2">Bass</text>
<text x="99.700" y="705.500" style="fill:#2a3268;stroke:#2a3268;stroke-width:.2">ALV Hyperbaric C</text>
<text x="188" y="705.500" style="fill:#044a42;stroke:#044a42;stroke-width:.2">Drum Rack</text>
<text x="276.500" y="705.500" style="fill:#5c3a08;stroke:#5c3a08;stroke-width:.2">ALV</text>
<text x="365" y="705.500" style="fill:#01304f;stroke:#01304f;stroke-width:.2">AMB</text>
<text x="1660" y="705.500" style="fill:#2a3268;stroke:#2a3268;stroke-width:.2">A Reverb</text>
<text x="1749" y="705.500" style="fill:#04466e;stroke:#04466e;stroke-width:.2">B Delay</text>
<text x="1838.500" y="705.500" style="fill:#4a2a5a;stroke:#4a2a5a;stroke-width:.2">Main</text>

<use href="#st" x="8"/><use href="#st" x="96.700"/><use href="#st" x="185"/><use href="#st" x="273.300"/><use href="#st" x="361.700"/><use href="#st" x="1656.700"/><use href="#st" x="1745"/>
<use href="#pv" x="1836.700"/><use href="#fd" x="1836.700"/><use href="#tk" x="1836.700"/>

<g>
<text class="m" x="31" y="727.500">-8.93</text><text class="m" x="31" y="744.500">-2.2</text>
<text class="m" x="119.700" y="727.500">-14.3</text><text class="m" x="119.700" y="744.500">-3.6</text>
<text class="m" x="208" y="727.500">-10.6</text><text class="m" x="208" y="744.500">-7.6</text>
<text class="m" x="296.300" y="727.500">-3.99</text><text class="m" x="296.300" y="744.500">0</text>
<text class="m" x="384.700" y="727.500">-17.3</text><text class="m" x="385.700" y="744.500">-57.0</text>
<text class="m" x="1679.700" y="727.500">-∞</text><text class="m" x="1679.700" y="744.500">0</text>
<text class="m" x="1768" y="727.500">-∞</text><text class="m" x="1768" y="744.500">0</text>
<text class="m" x="1860" y="727.500">-4.78</text><text class="m" x="1860" y="744.500">-1.7</text>
</g>
<circle cx="371" cy="737.500" r="2" fill="#e02020"/>

<!-- fader triangles -->
<path fill="#0a0a0a" d="M51 751.800l10.700 5.500-10.700 5.500zM139.300 758.200l10.700 5.500-10.700 5.500zM228 776.800l10.700 5.500-10.700 5.500zM316 741.500l10.700 5.500-10.700 5.500zM404.300 971.800l10.700 5.500-10.700 5.500zM1699.300 741.500l10.700 5.500-10.700 5.500zM1788 741.500l10.700 5.500-10.700 5.500zM1880 750.200l10.700 5.500-10.700 5.500z"/>
<circle cx="411" cy="977.300" r="1.800" fill="#e02020"/>

<!-- knobs -->
<use href="#knob" x="31" y="935.700"/><use href="#nd" x="31" y="935.700"/>
<use href="#knob" x="119.300" y="935.700"/><path d="M119.300 924.200A11.500 11.500 0 0 0 109.300 930" stroke="#00e0f0" stroke-width="2" fill="none"/><path d="M116.300 918.700h6l-3 3z" fill="#00e0f0"/><path d="M119.300 935.700l-9-5" stroke="#222" stroke-width="2"/>
<use href="#knob" x="208" y="935.700"/><use href="#nd" x="208" y="935.700"/>
<use href="#knob" x="296" y="935.700"/><path d="M296 924.200A11.500 11.500 0 0 1 304 927.500" stroke="#00e0f0" stroke-width="2" fill="none"/><path d="M293 918.700h6l-3 3z" fill="#00e0f0"/><path d="M296 935.700l8.500-7" stroke="#222" stroke-width="2"/>
<use href="#knob" x="384.300" y="935.700"/><use href="#nd" x="384.300" y="935.700"/>
<use href="#knob" x="1679.300" y="935.700"/><use href="#nd" x="1679.300" y="935.700"/>
<use href="#knob" x="1767.500" y="935.700"/><use href="#nd" x="1767.500" y="935.700"/>
<use href="#knob" x="1860" y="935.700"/><use href="#nd" x="1860" y="935.700"/>
<!-- Solo & cue -->
<rect x="1848.500" y="959.500" width="23" height="11" fill="#f5f5f5" stroke="#444"/><text class="m" x="1860" y="968.500">Solo</text>
<path d="M1852.600 996.100A11.500 11.500 0 0 1 1860 975.800" stroke="#2a80e8" stroke-width="1.800" fill="none"/><path d="M1860 975.800A11.500 11.500 0 0 1 1867.400 996.100" stroke="#111" stroke-width="1.800" fill="none"/><path d="M1860 987.500V976" stroke="#222" stroke-width="2"/>
<path d="M1856.500 998v-1a3.500 3.500 0 0 1 7 0v1" fill="none" stroke="#333" stroke-width="1.200"/><path d="M1856 997.500h1.500v2h-1.500zM1862.500 997.500h1.500v2h-1.500z" fill="#333"/>

<!-- Track buttons & strip buttons -->
<g>
<text class="m" x="31" y="965" style="font-size:13px;font-weight:bold;fill:#111">1</text>
<text class="m" x="119.700" y="965" style="font-size:13px;font-weight:bold;fill:#111">2</text>
<text class="m" x="208" y="965" style="font-size:13px;font-weight:bold;fill:#111">3</text>
<text class="m" x="296.300" y="965" style="font-size:13px;font-weight:bold;fill:#111">4</text>
<text class="m" x="384.700" y="965" style="font-size:13px;font-weight:bold;fill:#111">5</text>
<text class="m" x="1679.700" y="965" style="font-size:13px;font-weight:bold;fill:#111">A</text>
<text class="m" x="1768" y="965" style="font-size:13px;font-weight:bold;fill:#111">B</text>
</g>
<rect class="w" x="20.500" y="991.500" width="21" height="11"/><use href="#midiarm" x="31" y="997"/>
<rect class="w" x="109.200" y="991.500" width="21" height="11"/><use href="#midiarm" x="119.700" y="997"/>
<rect class="w" x="197.500" y="991.500" width="21" height="11"/><circle cx="208" cy="997" r="3.500" fill="#111"/>
<rect class="w" x="285.800" y="991.500" width="21" height="11"/><use href="#midiarm" x="296.300" y="997"/>
<rect class="w" x="374.200" y="991.500" width="21" height="11"/><circle cx="384.700" cy="997" r="3.500" fill="#111"/>

<!-- status bar -->
<circle cx="17" cy="1032" r="7" fill="#a6a6a6"/><rect x="16" y="1030.500" width="2" height="6" fill="#787878"/><rect x="16" y="1027.500" width="2" height="2" fill="#787878"/>
<rect x="39" y="1024" width="1532.700" height="17.700" rx="3" fill="#a7a7a7"/>
<rect x="1581" y="1024" width="204" height="17.700" rx="3" fill="#a7a7a7"/><path d="M1598.500 1024v18" stroke="#6f6f6f"/><path d="M1587 1029v7l5.500-3.500z" fill="#111"/>
<rect x="1793" y="1024" width="73.700" height="17.700" rx="3" fill="#a7a7a7"/><path d="M1811.500 1024v18" stroke="#6f6f6f"/><path d="M1799 1029v7l5.500-3.500z" fill="#111"/>
<text x="1818.500" y="1036.500" style="fill:#111">Bass</text>
<rect x="1846" y="1024" width="7" height="17.700" fill="#b9b9b9"/><rect x="1853.300" y="1026.700" width="13.400" height="13.400" rx="1" fill="#0c0c0c"/>
<path d="M1884 1032v7M1888 1029v10M1892 1025v14M1896 1030v9" stroke="#ffb400" stroke-width="1.800"/><path d="M1903 1031h6l-3 5z" fill="#9c9c9c"/>
</svg>
</body></html>
